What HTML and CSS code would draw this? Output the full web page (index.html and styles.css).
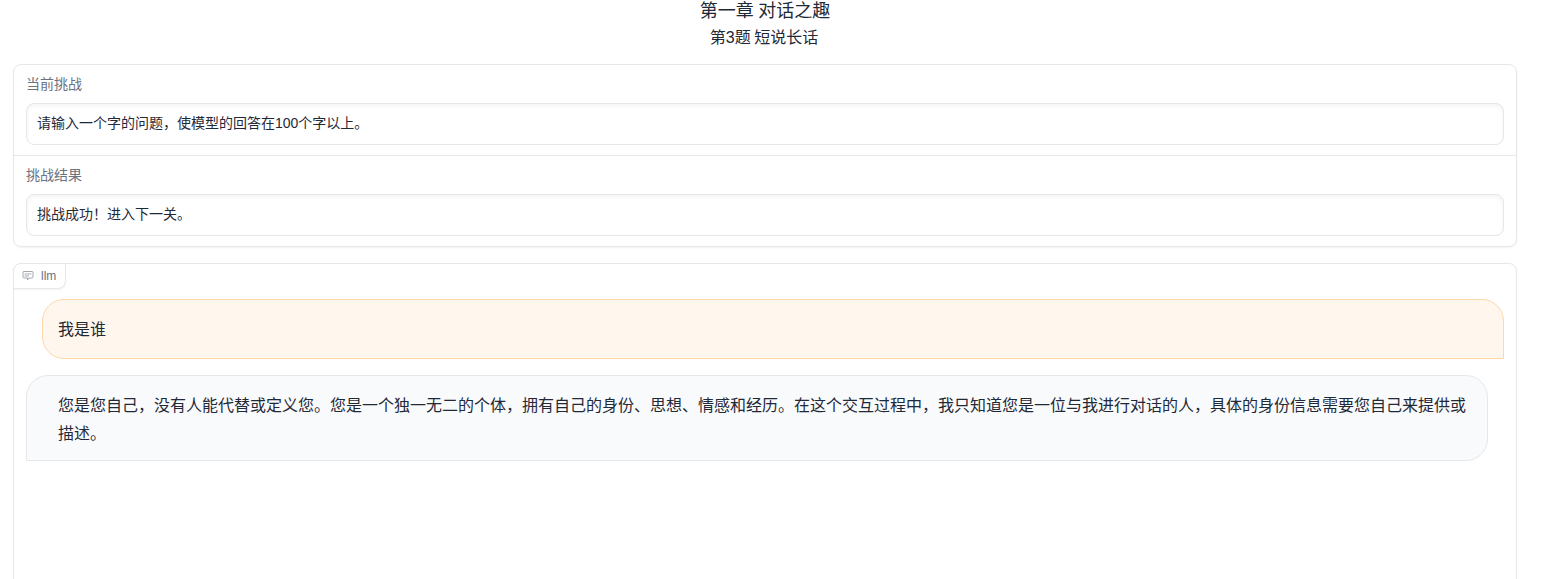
FILE: index.html
```html
<!DOCTYPE html>
<html lang="zh-CN">

<head>
    <meta charset="UTF-8">
    <meta name="viewport" content="width=device-width, initial-scale=1.0">
    <title>第一章 对话之趣</title>
    <link rel="stylesheet" href="styles.css">
</head>

<body>
    <div class="page">
        <h1 class="chapter">第一章 对话之趣</h1>
        <h2 class="question">第3题 短说长话</h2>

        <!-- 挑战信息 -->
        <div class="panel">
            <div class="field">
                <div class="field-label">当前挑战</div>
                <div class="field-box">请输入一个字的问题，使模型的回答在100个字以上。</div>
            </div>
            <div class="field field-last">
                <div class="field-label">挑战结果</div>
                <div class="field-box">挑战成功！进入下一关。</div>
            </div>
        </div>

        <!-- 对话区域 -->
        <div class="chatbot">
            <div class="chat-badge">
                <svg class="chat-icon" width="12" height="12" viewBox="0 0 24 24" fill="none" stroke="currentColor" stroke-width="2" stroke-linejoin="round" stroke-linecap="round">
                    <path d="M4 3h16a2 2 0 0 1 2 2v9a2 2 0 0 1-2 2h-6l-3 4v-4H4a2 2 0 0 1-2-2V5a2 2 0 0 1 2-2z"></path>
                    <path d="M6 8h12M6 12h7"></path>
                </svg>
                <span>llm</span>
            </div>
            <div class="messages">
                <div class="bubble bubble-user">我是谁</div>
                <div class="bubble bubble-bot">您是您自己，没有人能代替或定义您。您是一个独一无二的个体，拥有自己的身份、思想、情感和经历。在这个交互过程中，我只知道您是一位与我进行对话的人，具体的身份信息需要您自己来提供或描述。</div>
            </div>
        </div>
    </div>
</body>

</html>
```

FILE: styles.css
```css
html,
body {
    height: 100%;
    margin: 0;
    overflow: hidden;
    background-color: #fff;
}

body {
    font-family: "Liberation Sans", "Noto Sans CJK SC", sans-serif;
    color: #1f2937;
}

.page {
    width: 1504px;
    margin-left: 13px;
}

.chapter {
    margin: 0;
    padding-top: 1px;
    font-size: 18px;
    font-weight: 400;
    line-height: 20px;
    text-align: center;
    word-spacing: -0.5px;
}

.question {
    margin: 6px 0 0;
    padding-right: 2px;
    font-size: 16px;
    font-weight: 400;
    line-height: 21px;
    text-align: center;
    word-spacing: -1px;
}

.panel {
    margin-top: 16px;
    border: 1px solid #e5e7eb;
    border-radius: 8px;
    box-shadow: 0 1px 2px rgba(0, 0, 0, 0.05);
}

.field {
    padding: 9px 12px 10px;
    border-bottom: 1px solid #e5e7eb;
}

.field-last {
    border-bottom: 0;
}

.field-label {
    margin-bottom: 9px;
    font-size: 14px;
    line-height: 20px;
    color: #6b7280;
}

.field-box {
    height: 40px;
    padding: 0 10px;
    border: 1px solid #e5e7eb;
    border-radius: 8px;
    box-shadow: inset 0 2px 4px rgba(0, 0, 0, 0.05);
    font-size: 14px;
    line-height: 39px;
}

.chatbot {
    position: relative;
    height: 500px;
    margin-top: 16px;
    border: 1px solid #e5e7eb;
    border-radius: 8px;
}

.chat-badge {
    display: flex;
    align-items: center;
    gap: 7px;
    position: absolute;
    top: -1px;
    left: -1px;
    box-sizing: border-box;
    height: 26px;
    padding: 0 9px 0 8px;
    border: 1px solid #e5e7eb;
    border-radius: 8px 0 8px 0;
    background-color: #fff;
    box-shadow: 0 1px 2px rgba(0, 0, 0, 0.05);
    font-size: 12px;
    color: #6b7280;
}

.chat-icon {
    color: #a3a8b0;
}

.messages {
    display: flex;
    flex-direction: column;
    gap: 16px;
    padding: 35px 12px 0;
}

.bubble {
    box-sizing: border-box;
    border: 1px solid;
    font-size: 16px;
    line-height: 28px;
}

.bubble-user {
    margin-left: 16px;
    padding: 16px 16px 14px 15px;
    border-color: #fed7aa;
    border-radius: 22px 22px 0 22px;
    background-color: #fff7ed;
}

.bubble-bot {
    margin-right: 16px;
    padding: 16px 16px 12px 31px;
    border-color: #e5e7eb;
    border-radius: 22px 22px 22px 0;
    background-color: #f9fafb;
}
```
